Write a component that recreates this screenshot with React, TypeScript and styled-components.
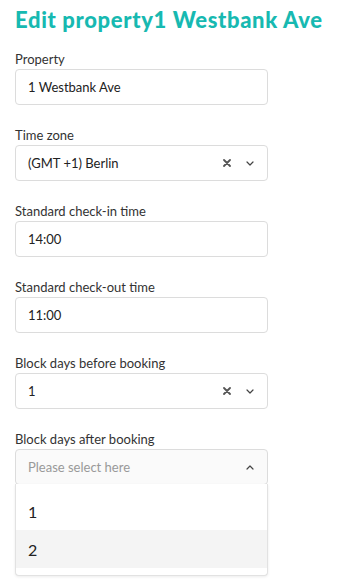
import React from 'react';
import styled, { createGlobalStyle } from 'styled-components';

const GlobalStyle = createGlobalStyle`
  body {
    margin: 0;
    background: #ffffff;
    font-family: Lato, "Liberation Sans", Arial, sans-serif;
    color: #222;
  }
`;

const Page = styled.div`
  padding: 6px 15px 0 15px;
  width: 253px;
  min-height: 583px;
  box-sizing: content-box;
`;

const Title = styled.h1`
  margin: 0 0 17px 0;
  font-family: Lato, sans-serif;
  font-weight: 900;
  font-size: 22px;
  line-height: 28px;
  color: #17b9b1;
  white-space: nowrap;
  letter-spacing: 0.65px;
`;

const Field = styled.div`
  position: relative;
  margin-bottom: 22px;
`;

const Label = styled.div`
  font-size: 13px;
  line-height: 16px;
  color: #333;
  margin-bottom: 2px;
`;

const Box = styled.div<{ $open?: boolean }>`
  box-sizing: border-box;
  height: 36px;
  border: 1px solid #dcdcdc;
  border-radius: 4px;
  background: ${p => (p.$open ? '#fafafa' : '#fff')};
  display: flex;
  align-items: center;
  padding: 0 13px 0 12px;
  font-size: 13px;
  color: ${p => (p.$open ? '#999' : '#222')};
`;

const Value = styled.span`
  flex: 1;
`;

const Icons = styled.div`
  display: flex;
  align-items: center;
  gap: 15px;
`;

const Menu = styled.div`
  position: absolute;
  left: 0;
  right: 0;
  top: 53px;
  box-sizing: border-box;
  background: #fff;
  border: 1px solid #e2e2e2;
  border-top: none;
  border-radius: 0 0 4px 4px;
  box-shadow: 0 1px 3px rgba(0, 0, 0, 0.08);
  padding: 8px 0 7px 0;
`;

const Option = styled.div<{ $active?: boolean }>`
  height: 38px;
  display: flex;
  align-items: center;
  padding-left: 12px;
  font-size: 16px;
  color: #222;
  background: ${p => (p.$active ? '#f4f4f4' : '#fff')};
`;

const Clear = () => (
  <svg width="8" height="8" viewBox="0 0 8 8">
    <path d="M1 1 L7 7 M7 1 L1 7" stroke="#555" strokeWidth="1.8" strokeLinecap="round" />
  </svg>
);

const Chevron = ({ up }: { up?: boolean }) => (
  <svg width="8" height="5" viewBox="0 0 8 5">
    <path
      d={up ? 'M1 4 L4 1 L7 4' : 'M1 1 L4 4 L7 1'}
      stroke="#444"
      strokeWidth="1.2"
      fill="none"
      strokeLinecap="round"
      strokeLinejoin="round"
    />
  </svg>
);

const TextField = ({ label, value }: { label: string; value: string }) => (
  <Field>
    <Label>{label}</Label>
    <Box>
      <Value>{value}</Value>
    </Box>
  </Field>
);

const SelectField = ({ label, value }: { label: string; value: string }) => (
  <Field>
    <Label>{label}</Label>
    <Box>
      <Value>{value}</Value>
      <Icons>
        <Clear />
        <Chevron />
      </Icons>
    </Box>
  </Field>
);

export default function App() {
  return (
    <Page>
      <GlobalStyle />
      <Title>Edit property1 Westbank Ave</Title>
      <TextField label="Property" value="1 Westbank Ave" />
      <SelectField label="Time zone" value="(GMT +1) Berlin" />
      <TextField label="Standard check-in time" value="14:00" />
      <TextField label="Standard check-out time" value="11:00" />
      <SelectField label="Block days before booking" value="1" />
      <Field>
        <Label>Block days after booking</Label>
        <Box $open>
          <Value>Please select here</Value>
          <Chevron up />
        </Box>
        <Menu>
          <Option>1</Option>
          <Option $active>2</Option>
        </Menu>
      </Field>
    </Page>
  );
}
